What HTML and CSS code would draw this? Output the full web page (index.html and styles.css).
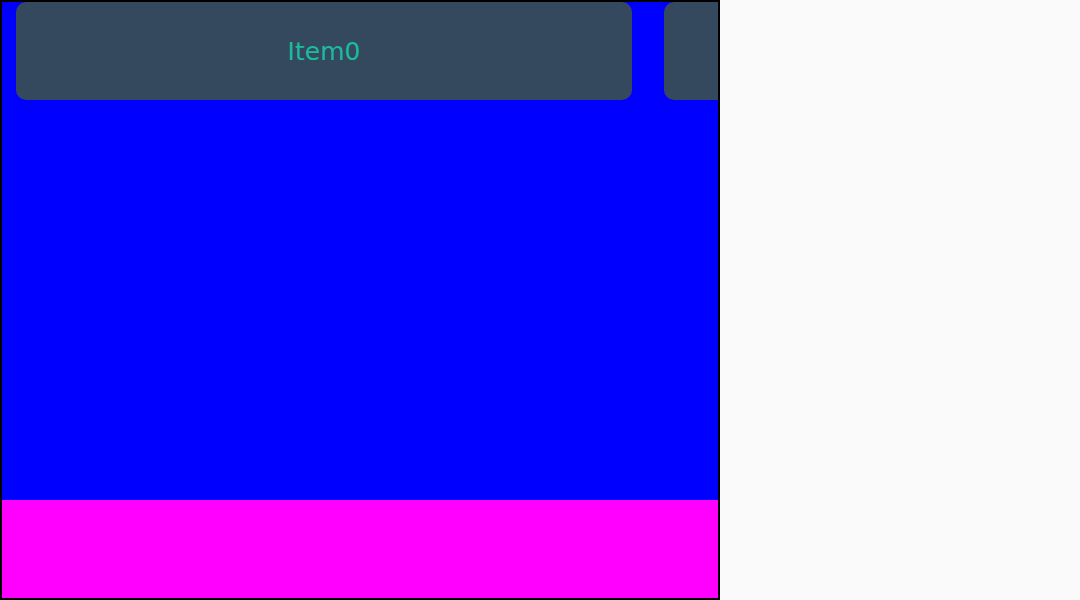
FILE: index.html
```html
<!DOCTYPE html>
<html>
<head>
<meta charset="utf-8">
<link rel="stylesheet" href="styles.css">
</head>
<body>
<div class="frame">
  <div class="main">
    <div class="row">
      <div class="card"><span class="label">Item0</span></div>
      <div class="card"></div>
    </div>
  </div>
  <div class="footer"></div>
</div>
</body>
</html>
```
FILE: styles.css
```css
html, body {
  margin: 0;
  padding: 0;
  background: #fafafa;
}
.frame {
  width: 720px;
  height: 600px;
  box-sizing: border-box;
  border: 2px solid #000;
  display: flex;
  flex-direction: column;
  overflow: hidden;
}
.main {
  flex: 1;
  background: #0000ff;
  overflow: hidden;
}
.row {
  display: flex;
  gap: 32px;
  padding-left: 14px;
}
.card {
  flex: 0 0 616px;
  height: 98px;
  background: #34495e;
  border-radius: 10px;
  display: flex;
  align-items: center;
  justify-content: center;
}
.label {
  font-family: "DejaVu Sans", sans-serif;
  font-size: 25px;
  color: #1abc9c;
}
.footer {
  height: 98px;
  background: #ff00ff;
}
```
